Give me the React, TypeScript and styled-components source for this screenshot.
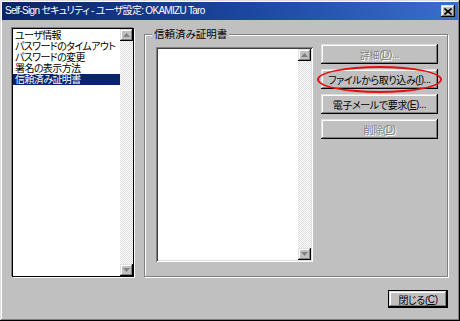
import React from "react";
import styled, { createGlobalStyle } from "styled-components";

const GlobalStyle = createGlobalStyle`
  html, body {
    margin: 0;
    padding: 0;
    background: #c0c0c0;
  }
  body {
    font-family: "Liberation Sans", "Noto Sans CJK JP", sans-serif;
    font-feature-settings: "palt";
    -webkit-font-smoothing: none;
  }
`;

const raised = `
  box-shadow: inset -1px -1px #000, inset 1px 1px #dfdfdf,
    inset -2px -2px #808080, inset 2px 2px #fff;
`;

const Window = styled.div`
  width: 460px;
  height: 321px;
  box-sizing: border-box;
  padding: 2px;
  background: #c0c0c0;
  display: flex;
  flex-direction: column;
  ${raised}
`;

const TitleBar = styled.div`
  height: 18px;
  display: flex;
  align-items: center;
  justify-content: space-between;
  padding: 0 3px 0 3px;
  background: linear-gradient(90deg, #0a246a 0%, #1c48a0 55%, #3a6fcc 100%);
`;

const TitleText = styled.span`
  color: #fff;
  font-size: 10px;
  letter-spacing: -0.7px;
  line-height: 18px;
  white-space: nowrap;
`;

const CloseBox = styled.div`
  width: 14px;
  height: 12px;
  background: #c0c0c0;
  display: flex;
  align-items: center;
  justify-content: center;
  ${raised}
`;

const Body = styled.div`
  flex: 1;
  display: flex;
  flex-direction: column;
  padding: 8px 10px 0 10px;
`;

const MainRow = styled.div`
  display: flex;
  gap: 10px;
  height: 249px;
`;

const ListBox = styled.div`
  width: 122px;
  height: 249px;
  box-sizing: border-box;
  border: 1px solid #000;
  box-shadow: -1px -1px 0 #808080, 1px 1px 0 #fff;
  display: flex;
  background: #fff;
`;

const Items = styled.div`
  flex: 1;
  min-width: 0;
  padding-top: 1px;
  background: #fff;
`;

const Item = styled.div<{ $selected?: boolean }>`
  height: 11px;
  line-height: 11px;
  font-size: 10px;
  letter-spacing: -0.6px;
  padding-left: 2px;
  white-space: nowrap;
  overflow: hidden;
  color: ${(p) => (p.$selected ? "#fff" : "#000")};
  background: ${(p) => (p.$selected ? "#0a246a" : "transparent")};
`;

const ScrollBar = styled.div`
  width: 13px;
  flex-shrink: 0;
  display: flex;
  flex-direction: column;
`;

const ScrollTrack = styled.div`
  flex: 1;
  background-color: #fff;
  background-image: conic-gradient(#dcdcdc 25%, #fff 0 50%, #dcdcdc 0 75%, #fff 0);
  background-size: 2px 2px;
`;

const ScrollButton = styled.div`
  height: 12px;
  background: #c0c0c0;
  display: flex;
  align-items: center;
  justify-content: center;
  ${raised}
`;

const GroupBox = styled.div`
  position: relative;
  flex: 1;
  margin-top: 6px;
  height: 243px;
  box-sizing: border-box;
  border: 1px solid #808080;
  box-shadow: inset 1px 1px #fff, 1px 1px 0 #fff;
  display: flex;
  align-items: flex-start;
  padding: 9px 0 0 11px;
`;

const GroupLabel = styled.span`
  position: absolute;
  top: -7px;
  left: 7px;
  padding: 0 2px;
  background: #c0c0c0;
  font-size: 10.5px;
  line-height: 13px;
  color: #000;
`;

const CertList = styled.div`
  width: 157px;
  height: 215px;
  margin-top: 3px;
  box-sizing: border-box;
  padding: 2px;
  display: flex;
  justify-content: flex-end;
  background: #fff;
  box-shadow: inset 1px 1px #808080, inset -1px -1px #fff,
    inset 2px 2px #404040, inset -2px -2px #dfdfdf;
`;

const ButtonColumn = styled.div`
  position: relative;
  width: 117px;
  margin-left: 8px;
  display: flex;
  flex-direction: column;
  gap: 5px;
`;

const PushButton = styled.div<{ $disabled?: boolean; $default?: boolean }>`
  height: 20px;
  box-sizing: border-box;
  display: flex;
  align-items: center;
  justify-content: center;
  font-size: 10px;
  letter-spacing: -0.4px;
  white-space: nowrap;
  background: #c0c0c0;
  color: ${(p) => (p.$disabled ? "#808080" : "#000")};
  text-shadow: ${(p) => (p.$disabled ? "1px 1px 0 #fff" : "none")};
  ${raised}
  ${(p) =>
    p.$default &&
    `
    border: 1px solid #000;
  `}
`;

const Highlight = styled.div`
  position: absolute;
  left: -4px;
  top: 22px;
  width: 125px;
  height: 27px;
  box-sizing: border-box;
  border: 2px solid #e41010;
  border-radius: 50%;
  pointer-events: none;
`;

const Footer = styled.div`
  display: flex;
  justify-content: flex-end;
  margin-top: 13px;
`;

const CloseButton = styled(PushButton)`
  width: 60px;
  height: 18px;
`;

const Key = styled.span`
  text-decoration: underline;
`;

const Arrow = ({ up }: { up?: boolean }) => (
  <svg width="7" height="4" viewBox="0 0 7 4">
    <polygon points={up ? "3.5,0 7,4 0,4" : "0,0 7,0 3.5,4"} fill="#808080" />
  </svg>
);

const CloseIcon = () => (
  <svg width="8" height="7" viewBox="0 0 8 7">
    <path d="M0.5 0.5 L7.5 6.5 M7.5 0.5 L0.5 6.5" stroke="#000" strokeWidth="1.6" />
  </svg>
);

const VScroll = () => (
  <ScrollBar>
    <ScrollButton>
      <Arrow up />
    </ScrollButton>
    <ScrollTrack />
    <ScrollButton>
      <Arrow />
    </ScrollButton>
  </ScrollBar>
);

const pages = [
  "ユーザ情報",
  "パスワードのタイムアウト",
  "パスワードの変更",
  "署名の表示方法",
  "信頼済み証明書",
];

export default function App() {
  return (
    <>
      <GlobalStyle />
      <Window>
        <TitleBar>
          <TitleText>Self-Sign セキュリティ - ユーザ設定: OKAMIZU Taro</TitleText>
          <CloseBox>
            <CloseIcon />
          </CloseBox>
        </TitleBar>
        <Body>
          <MainRow>
            <ListBox>
              <Items>
                {pages.map((p, i) => (
                  <Item key={p} $selected={i === pages.length - 1}>
                    {p}
                  </Item>
                ))}
              </Items>
              <VScroll />
            </ListBox>
            <GroupBox>
              <GroupLabel>信頼済み証明書</GroupLabel>
              <CertList>
                <VScroll />
              </CertList>
              <ButtonColumn>
                <PushButton $disabled>
                  詳細(<Key>D</Key>)...
                </PushButton>
                <PushButton>
                  ファイルから取り込み(<Key>I</Key>)...
                </PushButton>
                <PushButton>
                  電子メールで要求(<Key>E</Key>)...
                </PushButton>
                <PushButton $disabled>
                  削除(<Key>D</Key>)
                </PushButton>
                <Highlight />
              </ButtonColumn>
            </GroupBox>
          </MainRow>
          <Footer>
            <CloseButton $default>
              閉じる(<Key>C</Key>)
            </CloseButton>
          </Footer>
        </Body>
      </Window>
    </>
  );
}
